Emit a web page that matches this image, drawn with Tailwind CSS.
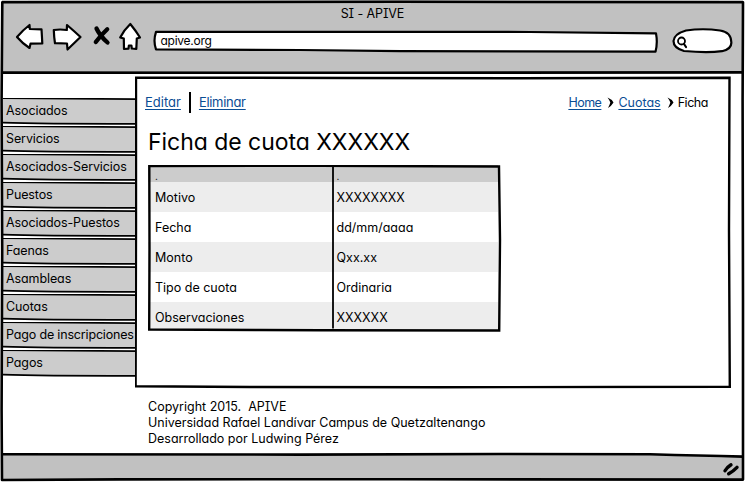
<!DOCTYPE html>
<html lang="es">
<head>
<meta charset="utf-8">
<title>SI - APIVE</title>
<script src="https://cdn.jsdelivr.net/npm/@tailwindcss/browser@4"></script>
</head>
<body class="w-[745px] h-[482px] overflow-hidden bg-white text-black text-[13px] leading-4 font-['Inter','Liberation_Sans',sans-serif] [font-feature-settings:'cv11','cv08']">
<div class="relative flex flex-col w-[745px] h-[482px]">
  <header class="flex flex-col h-[73px] mx-[2px] pt-[2px] bg-[#c1c1c1]">
    <h1 class="h-[24px] pt-[4px] text-center text-[12.5px] tracking-[-0.1px]">SI - APIVE</h1>
    <div class="flex items-start h-[30px] pl-[12px]">
      <svg class="w-[130px] h-[30px] shrink-0" viewBox="14 26 130 30" overflow="visible" fill="#fff" stroke="#000" stroke-width="2.2" stroke-linejoin="round" stroke-linecap="round">
        <path d="M17 37 Q23 30 29.5 25 L29.8 29 L41.5 29.3 Q42 37 42.3 43.5 L30.5 43.7 L29.5 48 Q22 43 17 37Z"/>
        <path d="M53.8 30 Q60 29 66.8 30 L67 25 Q74 31 80.5 37 L67.5 49.5 L67 43.5 L55 43.2 Q54 37 53.8 30Z"/>
        <path d="M96.5 28.5 Q100 36 107.5 42.5 M107.2 29.2 Q101 35 95.8 42" stroke-width="4.3" fill="none"/>
        <path d="M130.3 24 Q136 31 140 37.5 L136.8 38.5 L136.3 49 L131.8 48.5 L131.4 45.5 L128.9 45.5 L128.5 48.7 L124 49 L123.8 38.5 L120.2 37.5 Q124 30 130.3 24Z"/>
      </svg>
      <div class="relative w-[506px] h-[30px] shrink-0 ml-[9px]">
        <svg class="absolute inset-0 w-[506px] h-[30px]" viewBox="153 26 506 30" fill="#fff" stroke="#000" stroke-width="2.2" stroke-linejoin="round">
          <path d="M156 31.8 L395 31.8 L530 32 L656 33.4 Q657.8 43 655.5 51.7 L400 51.2 L300 50 L156 49.4 Q153 41 156 31.8Z"/>
        </svg>
        <span class="relative block pt-[7px] pl-[7.5px] text-[12px] tracking-[-0.25px]">apive.org</span>
      </div>
      <svg class="w-[62px] h-[30px] shrink-0 ml-[12px]" viewBox="671 26 62 30" fill="#fff" stroke="#000" stroke-width="2.2" stroke-linecap="round">
        <path d="M686 30.5 Q703 28 720 30.5 Q731 32 731.3 42 Q732 49 722 51.2 Q707 53 684 51 Q673.5 48 673.5 41 Q674 34 686 30.5Z"/>
        <circle cx="681.5" cy="41" r="3.5" stroke-width="1.8"/>
        <path d="M684 44 L686 47"/>
      </svg>
    </div>
  </header>

  <div class="flex h-[382px] pl-[3px]">
    <nav class="w-[132px] pt-[25px] shrink-0 text-[12.5px] tracking-[-0.1px]">
      <ul class="flex flex-col">
        <li class="relative h-[28px]"><svg class="absolute inset-0 w-[133px] h-[28px]" stroke="#000" stroke-width="1.7"><path d="M0 .2 L133 1 V26 Q55 26 0 25Z" fill="#ccc" stroke="none"/><path d="M0 .2 L133 1.1 M0 24.6 Q35 25.8 133 25.8" fill="none"/></svg><span class="relative block pl-[3px] pt-[5px]">Asociados</span></li>
        <li class="relative h-[28px]"><svg class="absolute inset-0 w-[133px] h-[28px]" stroke="#000" stroke-width="1.7"><path d="M0 .2 L133 1 V26 Q55 26 0 25Z" fill="#ccc" stroke="none"/><path d="M0 .2 L133 1.1 M0 24.6 Q35 25.8 133 25.8" fill="none"/></svg><span class="relative block pl-[3px] pt-[5px]">Servicios</span></li>
        <li class="relative h-[28px]"><svg class="absolute inset-0 w-[133px] h-[28px]" stroke="#000" stroke-width="1.7"><path d="M0 .2 L133 1 V26 Q55 26 0 25Z" fill="#ccc" stroke="none"/><path d="M0 .2 L133 1.1 M0 24.6 Q35 25.8 133 25.8" fill="none"/></svg><span class="relative block pl-[3px] pt-[5px] whitespace-nowrap">Asociados-Servicios</span></li>
        <li class="relative h-[28px]"><svg class="absolute inset-0 w-[133px] h-[28px]" stroke="#000" stroke-width="1.7"><path d="M0 .2 L133 1 V26 Q55 26 0 25Z" fill="#ccc" stroke="none"/><path d="M0 .2 L133 1.1 M0 24.6 Q35 25.8 133 25.8" fill="none"/></svg><span class="relative block pl-[3px] pt-[5px]">Puestos</span></li>
        <li class="relative h-[28px]"><svg class="absolute inset-0 w-[133px] h-[28px]" stroke="#000" stroke-width="1.7"><path d="M0 .2 L133 1 V26 Q55 26 0 25Z" fill="#ccc" stroke="none"/><path d="M0 .2 L133 1.1 M0 24.6 Q35 25.8 133 25.8" fill="none"/></svg><span class="relative block pl-[3px] pt-[5px] whitespace-nowrap">Asociados-Puestos</span></li>
        <li class="relative h-[28px]"><svg class="absolute inset-0 w-[133px] h-[28px]" stroke="#000" stroke-width="1.7"><path d="M0 .2 L133 1 V26 Q55 26 0 25Z" fill="#ccc" stroke="none"/><path d="M0 .2 L133 1.1 M0 24.6 Q35 25.8 133 25.8" fill="none"/></svg><span class="relative block pl-[3px] pt-[5px]">Faenas</span></li>
        <li class="relative h-[28px]"><svg class="absolute inset-0 w-[133px] h-[28px]" stroke="#000" stroke-width="1.7"><path d="M0 .2 L133 1 V26 Q55 26 0 25Z" fill="#ccc" stroke="none"/><path d="M0 .2 L133 1.1 M0 24.6 Q35 25.8 133 25.8" fill="none"/></svg><span class="relative block pl-[3px] pt-[5px]">Asambleas</span></li>
        <li class="relative h-[28px]"><svg class="absolute inset-0 w-[133px] h-[28px]" stroke="#000" stroke-width="1.7"><path d="M0 .2 L133 1 V26 Q55 26 0 25Z" fill="#ccc" stroke="none"/><path d="M0 .2 L133 1.1 M0 24.6 Q35 25.8 133 25.8" fill="none"/></svg><span class="relative block pl-[3px] pt-[5px]">Cuotas</span></li>
        <li class="relative h-[28px]"><svg class="absolute inset-0 w-[133px] h-[28px]" stroke="#000" stroke-width="1.7"><path d="M0 .2 L133 1 V26 Q55 26 0 25Z" fill="#ccc" stroke="none"/><path d="M0 .2 L133 1.1 M0 24.6 Q35 25.8 133 25.8" fill="none"/></svg><span class="relative block pl-[3px] pt-[5px] whitespace-nowrap tracking-[-0.17px]">Pago de inscripciones</span></li>
        <li class="relative h-[28px]"><svg class="absolute inset-0 w-[133px] h-[28px]" stroke="#000" stroke-width="1.7"><path d="M0 .2 L133 1 V26 Q55 26 0 25Z" fill="#ccc" stroke="none"/><path d="M0 .2 L133 1.1 M0 24.6 Q35 25.8 133 25.8" fill="none"/></svg><span class="relative block pl-[3px] pt-[5px]">Pagos</span></li>
      </ul>
    </nav>

    <div class="flex flex-col w-[597px] pt-[3px]">
      <main class="relative h-[313px]">
        <svg class="absolute inset-0 w-[597px] h-[313px]" viewBox="135 76 597 313" fill="none" stroke="#000" stroke-width="2.4"><path d="M136 77.6 L350 78 L520 78.3 L729.5 77.8 L729 230 L729.8 386.8 L440 387.2 L250 387 L135.6 386.2 L136 230Z"/></svg>
        <div class="relative flex items-center h-[22px] mt-[15px] pl-[10px] pr-[24px]">
          <a class="text-[#0a4d94] underline underline-offset-2" href="#">Editar</a>
          <span class="w-[2px] h-[21px] ml-[8px] mr-[8px] bg-black"></span>
          <a class="text-[#0a4d94] underline underline-offset-2 tracking-[-0.3px]" href="#">Eliminar</a>
          <nav class="flex items-center ml-auto pt-px text-[12.5px]">
            <a class="text-[#0a4d94] underline underline-offset-2 tracking-[-0.5px]" href="#">Home</a>
            <svg class="w-[7px] h-[11px] ml-[6px] mr-[4px]" viewBox="0 0 6 11"><path d="M0 .5 Q4 2 6 5.5 Q4 9 .5 11 Q2.5 7 2.8 5.5 Q2 3 0 .5Z"/></svg>
            <a class="text-[#0a4d94] underline underline-offset-2" href="#">Cuotas</a>
            <svg class="w-[7px] h-[11px] ml-[6px] mr-[4px]" viewBox="0 0 6 11"><path d="M0 .5 Q4 2 6 5.5 Q4 9 .5 11 Q2.5 7 2.8 5.5 Q2 3 0 .5Z"/></svg>
            <span class="tracking-[-0.45px]">Ficha</span>
          </nav>
        </div>
        <h2 class="relative pl-[13px] mt-[15px] text-[23px] leading-[28px] tracking-[-0.04px] whitespace-nowrap">Ficha de cuota XXXXXX</h2>
        <div class="relative w-[352px] h-[166px] ml-[13px] mt-[9px]">
          <div class="grid grid-cols-[184px_166px] grid-rows-[17px_30px_30px_30px_30px_28px] w-[350px] *:flex *:items-start *:pt-[8px] *:pl-[7px] *:even:pl-[4.5px] text-[12.5px]">
            <div class="bg-[#ccc] text-[10px]"><span class="-mt-[5px]">.</span></div><div class="bg-[#ccc] text-[10px]"><span class="-mt-[5px]">.</span></div>
            <div class="bg-[#ededed]">Motivo</div><div class="bg-[#ededed]">XXXXXXXX</div>
            <div>Fecha</div><div>dd/mm/aaaa</div>
            <div class="bg-[#ededed]">Monto</div><div class="bg-[#ededed]">Qxx.xx</div>
            <div>Tipo de cuota</div><div>Ordinaria</div>
            <div class="bg-[#ededed]">Observaciones</div><div class="bg-[#ededed]">XXXXXX</div>
          </div>
          <svg class="absolute inset-0 w-[354px] h-[168px]" viewBox="148 165 354 168" fill="none" stroke="#000" stroke-width="2.4"><path d="M149.3 166 L320 165.8 L499 166.5 L500 240 L499.2 330.5 L320 330.3 L260 330 L149.2 329.5 L149.5 250Z"/><path d="M333 166 V328.5" stroke-width="1.8"/></svg>
        </div>
      </main>
      <footer class="pl-[13px] pt-[10px] text-[12.5px]">
        <p>Copyright 2015.&nbsp; APIVE</p>
        <p>Universidad Rafael Landívar Campus de Quetzaltenango</p>
        <p>Desarrollado por Ludwing Pérez</p>
      </footer>
    </div>
  </div>
  <div class="h-[24px] mx-[2px] bg-[#c1c1c1]"></div>

  <svg class="absolute inset-0 w-[745px] h-[482px] pointer-events-none" fill="none" stroke="#000" stroke-width="2.6" stroke-linejoin="round">
    <path d="M640 454 L745 457 V452 H640Z" fill="#fff" stroke="none"/>
    <path d="M2.3 2.2 L400 1.8 L743 2.2 L742.6 100 L743 300 L743 479.6 L400 479.2 L120 479.4 L2 480 L1.6 410 L2.2 250 L1.6 100Z"/>
    <path d="M2 72.6 L380 72.8 L743 72.4 M2 454.3 L300 454.6 L500 454 L650 454.3 Q700 455.8 743 456.6"/>
    <path d="M725 470.8 Q726.8 467.5 731 464.8 M728.7 473.8 Q733.5 471 737 467.3" stroke-width="3.4" stroke-linecap="round"/>
  </svg>
</div>
</body>
</html>
